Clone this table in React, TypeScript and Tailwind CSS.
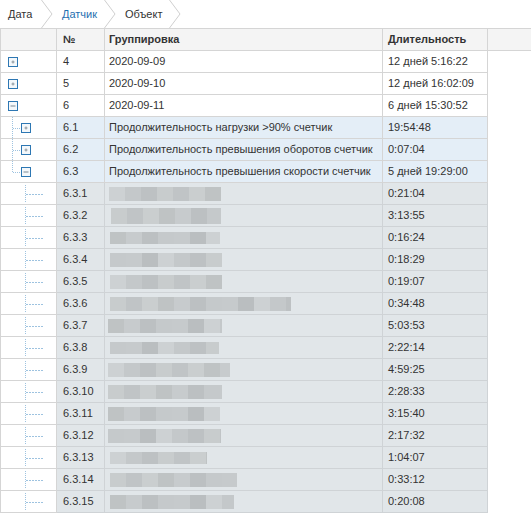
import React from "react";

type Row = {
  num: string;
  level: 0 | 1 | 2;
  name?: string;
  dur: string;
  open?: boolean;
  last?: boolean;
  blur?: [number, number, number]; // offset, width, height
};

const rows: Row[] = [
  { num: "4", level: 0, name: "2020-09-09", dur: "12 дней 5:16:22" },
  { num: "5", level: 0, name: "2020-09-10", dur: "12 дней 16:02:09" },
  { num: "6", level: 0, name: "2020-09-11", dur: "6 дней 15:30:52", open: true },
  { num: "6.1", level: 1, name: "Продолжительность нагрузки >90% счетчик", dur: "19:54:48" },
  { num: "6.2", level: 1, name: "Продолжительность превышения оборотов счетчик", dur: "0:07:04" },
  { num: "6.3", level: 1, name: "Продолжительность превышения скорости счетчик", dur: "5 дней 19:29:00", open: true, last: true },
  { num: "6.3.1", level: 2, dur: "0:21:04", blur: [4, 112, 14] },
  { num: "6.3.2", level: 2, dur: "3:13:55", blur: [6, 110, 16] },
  { num: "6.3.3", level: 2, dur: "0:16:24", blur: [5, 110, 12] },
  { num: "6.3.4", level: 2, dur: "0:18:29", blur: [5, 112, 14] },
  { num: "6.3.5", level: 2, dur: "0:19:07", blur: [5, 112, 14] },
  { num: "6.3.6", level: 2, dur: "0:34:48", blur: [5, 181, 14] },
  { num: "6.3.7", level: 2, dur: "5:03:53", blur: [3, 114, 14] },
  { num: "6.3.8", level: 2, dur: "2:22:14", blur: [5, 109, 12] },
  { num: "6.3.9", level: 2, dur: "4:59:25", blur: [3, 122, 14] },
  { num: "6.3.10", level: 2, dur: "2:28:33", blur: [3, 114, 14] },
  { num: "6.3.11", level: 2, dur: "3:15:40", blur: [3, 112, 14] },
  { num: "6.3.12", level: 2, dur: "2:17:32", blur: [3, 113, 14] },
  { num: "6.3.13", level: 2, dur: "1:04:07", blur: [5, 97, 12] },
  { num: "6.3.14", level: 2, dur: "0:33:12", blur: [5, 127, 14] },
  { num: "6.3.15", level: 2, dur: "0:20:08", blur: [5, 124, 14] },
];

const shades = ["#bfc3c4", "#c7cbcd", "#bcc0c2", "#c5c9cb", "#c6cacc", "#babec0", "#cdd1d3", "#c4c8ca", "#bdc1c3", "#c8cccd", "#c0c4c6", "#cacecf"];

function Blur({ spec, seed }: { spec: [number, number, number]; seed: number }) {
  const [off, width, h] = spec;
  const n = Math.ceil(width / 16);
  return (
    <div className="flex" style={{ marginLeft: off, width, height: h }}>
      {Array.from({ length: n }).map((_, i) => (
        <div
          key={i}
          className="h-full shrink-0"
          style={{ width: i === n - 1 ? width - 16 * (n - 1) : 16, background: shades[(i + seed * 3) % shades.length] }}
        />
      ))}
    </div>
  );
}

function ToggleBox({ x, open }: { x: number; open?: boolean }) {
  return (
    <g>
      <rect x={x + 0.5} y={6.5} width={9} height={9} fill="#f4f8fb" stroke="#2d77b3" />
      {open ? (
        <line x1={x + 2.5} y1={11} x2={x + 7.5} y2={11} stroke="#7d8a94" strokeWidth={1} />
      ) : (
        <>
          <line x1={x + 3.5} y1={11} x2={x + 6.5} y2={11} stroke="#8a949b" strokeWidth={1} />
          <line x1={x + 5} y1={9.5} x2={x + 5} y2={12.5} stroke="#8a949b" strokeWidth={1} />
        </>
      )}
    </g>
  );
}

function TreeCell({ row }: { row: Row }) {
  const dot = "#9ec3e0";
  return (
    <svg width="55" height="21" viewBox="0 0 55 21">
      {row.level === 0 && <ToggleBox x={7} open={row.open} />}
      {row.level === 1 && (
        <>
          <line x1={11.5} y1={0} x2={11.5} y2={row.last ? 11 : 21} stroke={dot} strokeDasharray="1 1" />
          <line x1={12} y1={11.5} x2={20} y2={11.5} stroke={dot} strokeDasharray="1 1" />
          <ToggleBox x={20} open={row.open} />
        </>
      )}
      {row.level === 2 && (
        <>
          <line x1={24.5} y1={2} x2={24.5} y2={20} stroke={dot} strokeDasharray="1 1" />
          <line x1={25} y1={11.5} x2={42} y2={11.5} stroke={dot} strokeDasharray="2 1" />
        </>
      )}
    </svg>
  );
}

function Chevron() {
  return (
    <svg width="12" height="28" viewBox="0 0 12 28" className="shrink-0">
      <polyline points="0.5,0 11,14 0.5,28" fill="none" stroke="#cfcfcf" strokeWidth="1" />
    </svg>
  );
}

export default function App() {
  return (
    <div className="w-[531px] h-[514px] bg-white text-[11px] text-[#333] overflow-hidden" style={{ fontFamily: '"Liberation Sans", Arial, sans-serif' }}>
      {/* Breadcrumb */}
      <div className="flex h-[28px] items-center text-[11px]">
        <div className="w-[41px] pl-[8px]">Дата</div>
        <Chevron />
        <div className="w-[51px] pl-[9px] text-[#1f70b0]">Датчик</div>
        <Chevron />
        <div className="w-[53px] pl-[9px]">Объект</div>
        <Chevron />
      </div>

      {/* Grid */}
      <div className="border-t border-[#d5d5d5]">
        <div className="flex h-[22px] bg-[#f4f4f4] border-b border-[#d5d5d5] font-bold">
          <div className="w-[57px] border-l border-r border-[#d5d5d5]" />
          <div className="w-[48px] border-r border-[#d5d5d5] pl-[6px] flex items-center">№</div>
          <div className="w-[278px] border-r border-[#d5d5d5] pl-[4px] flex items-center">Группировка</div>
          <div className="w-[105px] border-r border-[#d5d5d5] pl-[5px] flex items-center">Длительность</div>
          <div className="flex-1" />
        </div>

        {rows.map((row, i) => {
          const bg = row.level === 1 ? "bg-[#e4eef7]" : row.level === 2 ? "bg-[#e1e6e9]" : "bg-white";
          const border = row.level === 2 ? "border-[#cfd3d6]" : "border-[#d5d5d5]";
          return (
            <div key={row.num} className="flex h-[22px] w-[488px]">
              <div className="w-[57px] border-l border-r border-b border-[#d5d5d5] bg-white">
                <TreeCell row={row} />
              </div>
              <div className={`w-[48px] border-r border-b ${border} ${bg} pl-[6px] flex items-center`}>{row.num}</div>
              <div className={`w-[278px] border-r border-b ${border} ${bg} ${row.blur ? "" : "pl-[4px]"} flex items-center whitespace-nowrap`}>
                {row.blur ? <Blur spec={row.blur} seed={i} /> : row.name}
              </div>
              <div className={`w-[105px] border-r border-b ${border} ${bg} pl-[5px] flex items-center whitespace-nowrap`}>{row.dur}</div>
            </div>
          );
        })}
      </div>
    </div>
  );
}
